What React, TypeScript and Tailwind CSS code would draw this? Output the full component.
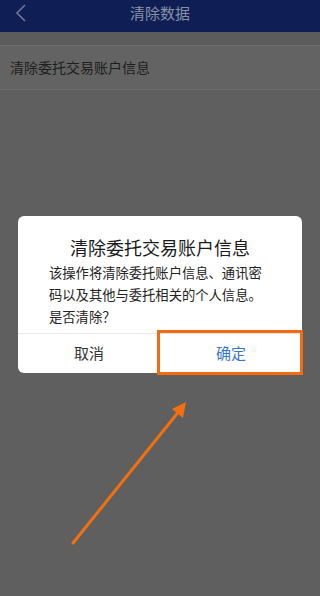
import React from "react";

const font = { fontFamily: '"Noto Sans CJK SC", "Noto Sans", sans-serif' };

export default function App() {
  return (
    <div
      className="relative w-[320px] h-[596px] overflow-hidden bg-[#5f5f5f]"
      style={font}
    >
      {/* Header */}
      <div className="relative h-[32px] bg-[#0f1f55] flex items-center justify-center">
        <svg
          className="absolute left-[15px] top-[3px]"
          width="12"
          height="20"
          viewBox="0 0 12 20"
          fill="none"
        >
          <path d="M10 2 L2 10 L10 18" stroke="#6f7896" strokeWidth="1.6" />
        </svg>
        <span className="text-[15px] text-[#8a90a6] leading-none -mt-[8px]">
          清除数据
        </span>
      </div>

      {/* Band */}
      <div className="h-[13px] bg-[#5c5c5c]" />

      {/* Row */}
      <div className="h-[45px] bg-[#636363] border-y border-[#6e6e6e] flex items-center px-[10px]">
        <span className="text-[14px] text-[#1e1e1e]">清除委托交易账户信息</span>
      </div>

      {/* Dialog */}
      <div className="absolute left-[18px] top-[216px] w-[284px] h-[157px] bg-white rounded-[6px] flex flex-col">
        <div className="pt-[20px] text-center text-[18px] leading-[22px] text-[#1a1a1a]">
          清除委托交易账户信息
        </div>
        <div className="mt-[4px] px-[31px] text-[13.3px] leading-[22px] text-[#222]">
          该操作将清除委托账户信息、通讯密码以及其他与委托相关的个人信息。是否清除？
        </div>
        <div className="mt-auto h-[40px] border-t border-[#e8e8e8] grid grid-cols-2">
          <div className="flex items-center justify-center text-[15px] text-[#333]">
            取消
          </div>
          <div className="flex items-center justify-center text-[15px] text-[#3a76cf]">
            确定
          </div>
        </div>
      </div>

      {/* Highlight box */}
      <div className="absolute left-[157px] top-[330px] w-[146px] h-[45px] border-[3px] border-[#f26a12]" />

      {/* Arrow */}
      <svg
        className="absolute left-0 top-0"
        width="320"
        height="596"
        viewBox="0 0 320 596"
        fill="none"
      >
        <line
          x1="73"
          y1="543"
          x2="180"
          y2="410"
          stroke="#f2700f"
          strokeWidth="3"
          strokeLinecap="round"
        />
        <path d="M186 402 L183 418 L172 409 Z" fill="#f2700f" />
      </svg>
    </div>
  );
}
